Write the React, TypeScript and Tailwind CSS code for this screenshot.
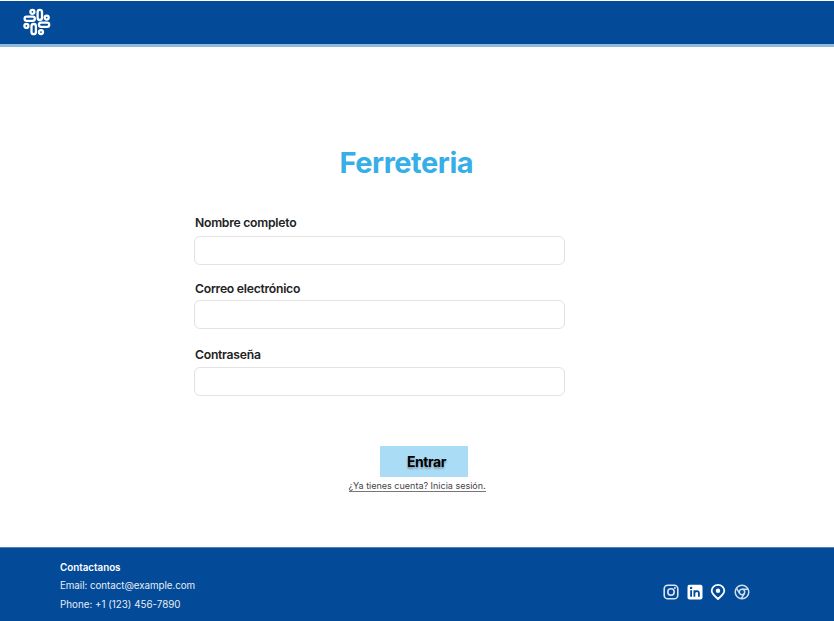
import React from 'react';

function Logo() {
  return (
    <svg width="30" height="30" viewBox="0 0 30 30" fill="none" stroke="#fff" strokeWidth="2.3" className="shrink-0">
      <circle cx="10.4" cy="4.8" r="2" />
      <circle cx="24.7" cy="10.6" r="2" />
      <circle cx="4.4" cy="18.9" r="2" />
      <circle cx="19" cy="25.1" r="2" />
      <rect x="15.6" y="2.8" width="4.4" height="10.2" rx="2.2" />
      <rect x="2.6" y="9.6" width="10.2" height="4.2" rx="2.1" />
      <rect x="17" y="15.6" width="10.2" height="4.2" rx="2.1" />
      <rect x="9.5" y="17" width="4.4" height="10.2" rx="2.2" />
    </svg>
  );
}

function Field({ label, id, className }: { label: string; id: string; className: string }) {
  return (
    <div className={`flex flex-col justify-between ${className}`}>
      <label htmlFor={id} className="ml-px text-[12.2px] leading-4 font-semibold tracking-[-0.26px] text-[#222]">
        {label}
      </label>
      <input id={id} className="h-[29px] w-full rounded-md border border-[#e2e2e2] bg-white px-3 text-xs outline-none" />
    </div>
  );
}

function SocialIcons() {
  return (
    <div className="flex items-center gap-[7.6px]">
      <svg width="16" height="16" viewBox="0 0 16 16" fill="none" stroke="#dbe5f2" strokeWidth="1.6">
        <rect x="1.2" y="1.2" width="13.6" height="13.6" rx="3.6" />
        <circle cx="8" cy="8" r="3.2" />
        <circle cx="11.9" cy="4.1" r="1" fill="#dbe5f2" stroke="none" />
      </svg>
      <svg width="16" height="16" viewBox="0 0 16 16">
        <rect x="0.5" y="0.7" width="15" height="14.8" rx="2" fill="#fff" />
        <g stroke="#034a98" strokeWidth="1.8" fill="none">
          <path d="M4.1 6.3V12.8M7.4 6.3V12.8M7.4 9.4C7.4 6.4 11.9 6.2 11.9 9.2V12.8" />
        </g>
        <circle cx="4.1" cy="3.9" r="1.2" fill="#034a98" />
      </svg>
      <svg width="16" height="16" viewBox="0 0 16 16" fill="none" stroke="#fff" strokeWidth="1.8">
        <path d="M8 15C5.5 12.5 1.7 10.2 1.7 6.8A6.3 5.9 0 0 1 14.3 6.8C14.3 10.2 10.5 12.5 8 15Z" strokeLinejoin="round" />
        <circle cx="8" cy="6.7" r="2.2" fill="#fff" stroke="none" />
      </svg>
      <svg width="16" height="16" viewBox="0 0 16 16" fill="none" stroke="#cfdded" strokeWidth="1.5">
        <circle cx="8" cy="8" r="6.8" />
        <circle cx="8" cy="8" r="2.7" />
        <path d="M8 5.3H14.1M5.66 9.35L2.4 4.2M10.34 9.35L7.2 14.8" />
      </svg>
    </div>
  );
}

export default function App() {
  return (
    <div className="flex h-[621px] w-[834px] flex-col overflow-hidden bg-white pt-px font-['Inter','Liberation_Sans',sans-serif]">
      <header className="flex h-[46px] shrink-0 items-start border-b-[3px] border-[#8fbbdc] bg-[#034a98] pt-[6px] pl-[22px]">
        <Logo />
      </header>

      <main className="flex h-[500px] shrink-0 flex-col pl-[194px]">
        <h1 className="mt-[98px] ml-[145.5px] text-[29px] leading-9 font-bold tracking-[-0.45px] text-[#36aee8]">
          <span>Ferreteria</span>
        </h1>
        <form className="mt-[34px] flex w-[371px] flex-col">
          <Field id="nombre" label="Nombre completo" className="h-[50px]" />
          <Field id="correo" label="Correo electrónico" className="mt-4 h-[48px]" />
          <Field id="clave" label="Contraseña" className="mt-[18px] h-[49px]" />
          <button
            type="button"
            className="mt-[50px] ml-[186px] h-[31px] w-[88px] bg-[#abdcf5] pl-[5px] text-[14px] font-bold tracking-[-0.45px] text-black [text-shadow:0_2px_2px_rgba(0,0,0,0.3)]"
          >
            <span>Entrar</span>
          </button>
        </form>
        <a className="mt-[3px] ml-[154.5px] self-start border-b border-[#777] text-[9px] leading-[11px] tracking-[0px] whitespace-nowrap text-[#444]">
          ¿Ya tienes cuenta? Inicia sesión.
        </a>
      </main>

      <footer className="flex flex-1 items-start justify-between border-t border-[#517fb6] bg-[#034a98] pr-[84px] pl-[60px] text-[9.8px] text-[#e6eef7]">
        <div className="flex flex-col pt-[11px] leading-[18.4px]">
          <strong className="font-semibold text-white">Contactanos</strong>
          <span className="tracking-[-0.05px]">Email: contact@example.com</span>
          <span>Phone: +1 (123) 456-7890</span>
        </div>
        <div className="pt-9">
          <SocialIcons />
        </div>
      </footer>
    </div>
  );
}
